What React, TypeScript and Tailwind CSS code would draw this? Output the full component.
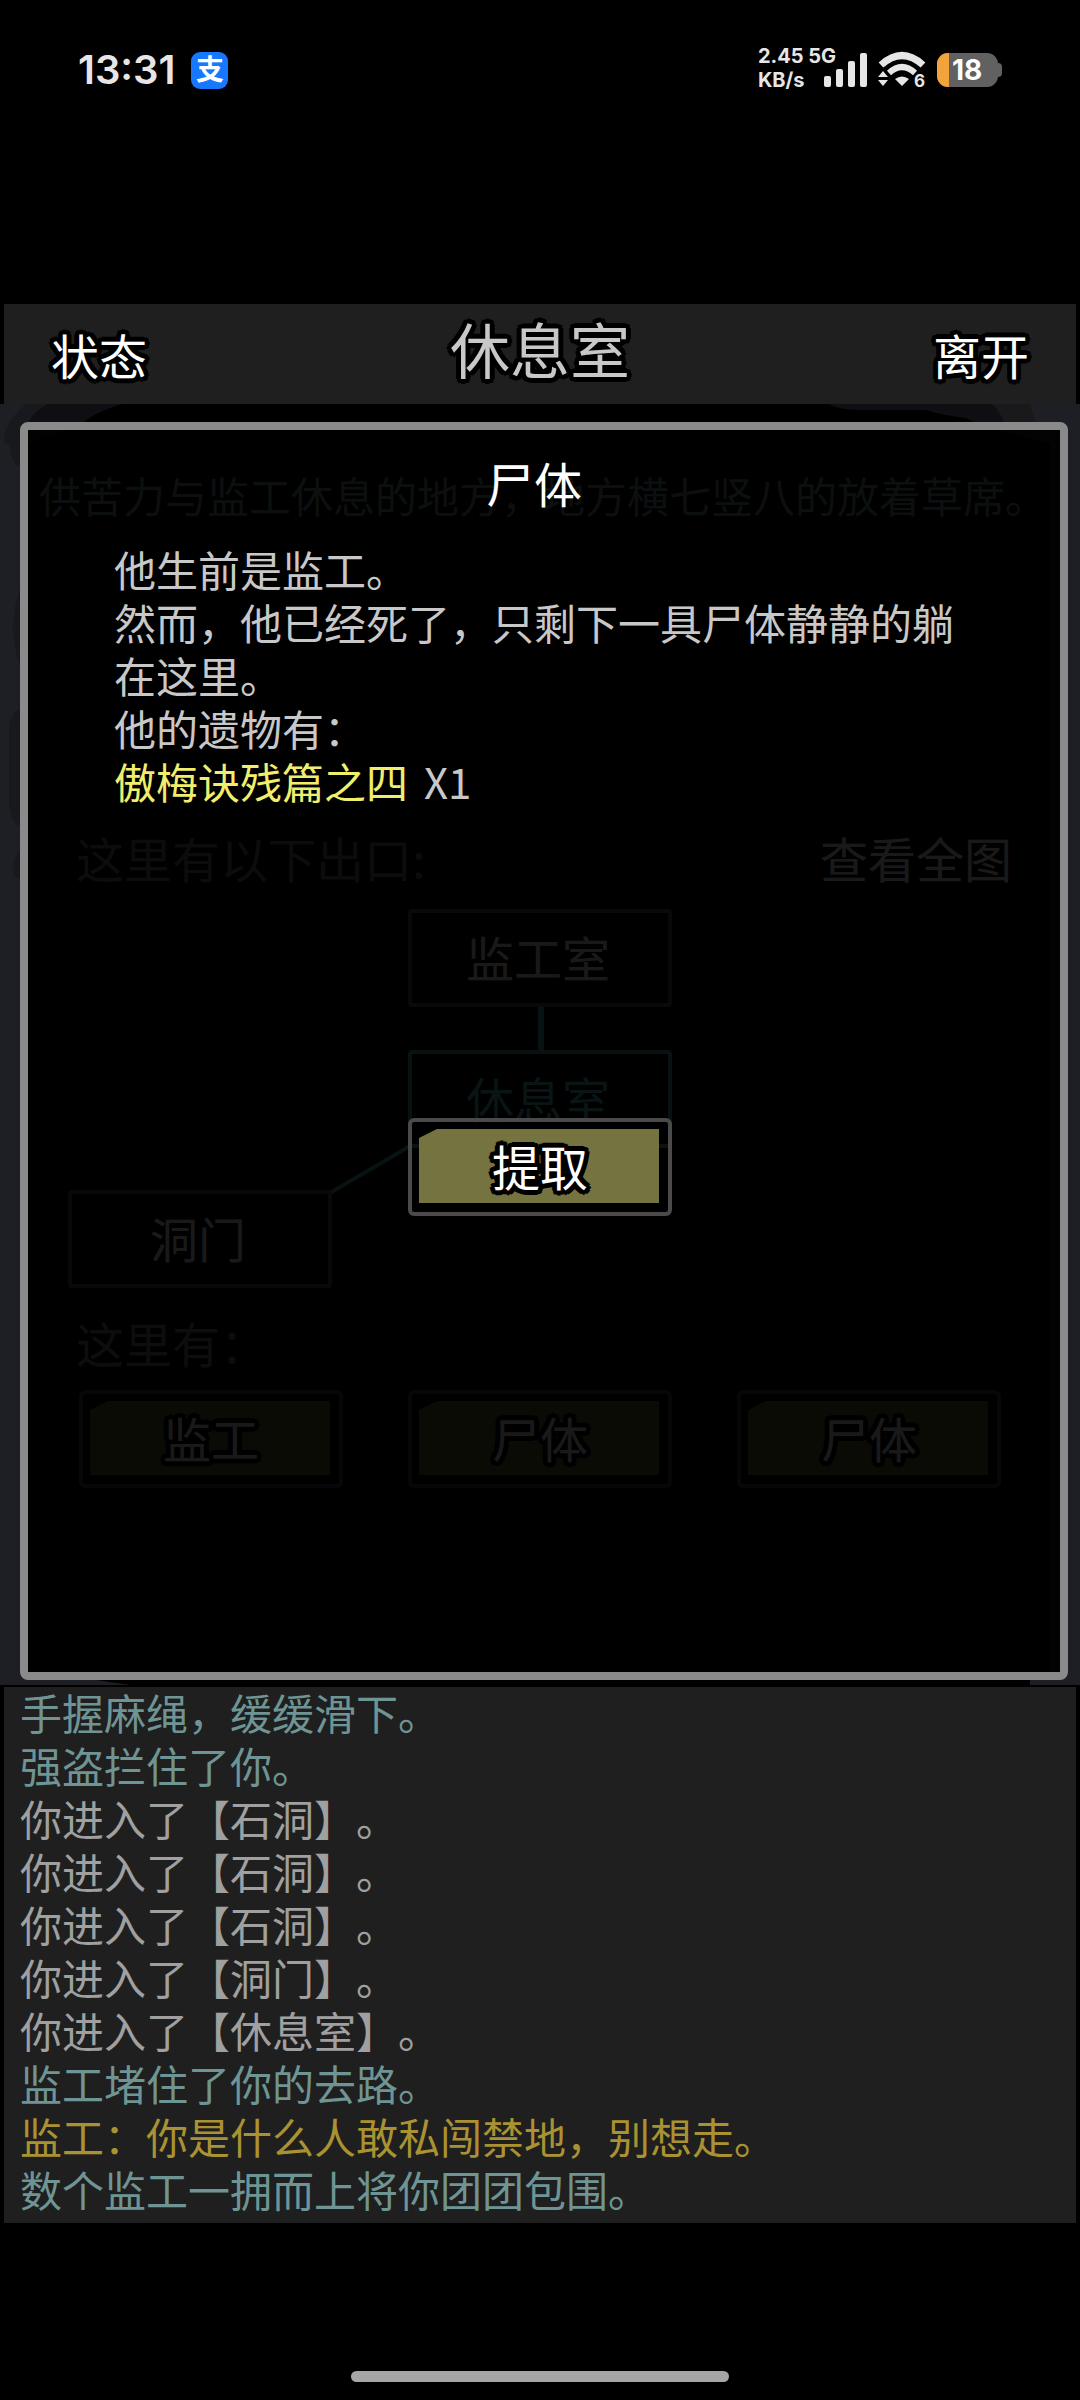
import React from "react";

interface LogEntry {
  text: string;
  tone: string;
}

const TEAL = "text-[#6f9494]";
const GRAY = "text-[#a0a0a0]";
const GOLD = "text-[#aa9232]";

const log: LogEntry[] = [
  { text: "手握麻绳，缓缓滑下。", tone: TEAL },
  { text: "强盗拦住了你。", tone: TEAL },
  { text: "你进入了【石洞】。", tone: GRAY },
  { text: "你进入了【石洞】。", tone: GRAY },
  { text: "你进入了【石洞】。", tone: GRAY },
  { text: "你进入了【洞门】。", tone: GRAY },
  { text: "你进入了【休息室】。", tone: GRAY },
  { text: "监工堵住了你的去路。", tone: TEAL },
  { text: "监工：你是什么人敢私闯禁地，别想走。", tone: GOLD },
  { text: "数个监工一拥而上将你团团包围。", tone: TEAL },
];

const occupants = ["监工", "尸体", "尸体"];

// Thick black edge with rounded joins around light text
const outline =
  "[-webkit-text-stroke:5px_#000] [paint-order:stroke_fill] [text-shadow:5px_0_#000,-5px_0_#000,0_5px_#000,0_-5px_#000,4px_3px_#000,-4px_3px_#000,4px_-3px_#000,-4px_-3px_#000,3px_4px_#000,-3px_4px_#000,3px_-4px_#000,-3px_-4px_#000,2px_2px_#000,-2px_2px_#000,2px_-2px_#000,-2px_-2px_#000]";

const StatusBar: React.FC = () => (
  <div className="flex h-[304px] items-start justify-between px-[78px] pt-[38px] font-['Inter','Noto_Sans_CJK_SC',sans-serif] text-[#e6e6e6]">
    <div className="flex h-[64px] items-center gap-4">
      <span className="text-[40px] leading-none font-semibold">13:31</span>
      <span className="flex h-[37px] w-[37px] items-center justify-center rounded-[9px] bg-[#1677ff] text-[28px] leading-none font-bold text-white">
        支
      </span>
    </div>
    <div className="flex h-[64px] items-center">
      <div className="pb-1 text-[20px] leading-[24px] font-bold">
        <div>2.45 5G</div>
        <div>KB/s</div>
      </div>
      <svg className="-ml-3 h-[36px] w-[44px]" viewBox="0 0 44 36" fill="currentColor">
        <rect x="0" y="24" width="7" height="11" rx="2" />
        <rect x="12" y="17" width="7" height="18" rx="2" />
        <rect x="24" y="9" width="7" height="26" rx="2" />
        <rect x="36" y="1" width="7" height="34" rx="2" />
      </svg>
      <svg className="ml-[10px] h-[38px] w-[48px] overflow-visible" viewBox="0 0 48 38">
        <path d="M3 14 Q24 -5 45 14" fill="none" stroke="currentColor" strokeWidth="7" />
        <path d="M11 22 Q24 10 37 22" fill="none" stroke="currentColor" strokeWidth="6" />
        <path d="M17 28 Q24 23 31 28 L24 35 Z" fill="currentColor" />
        <path d="M5 20 L10 26 H0 Z M0 29 H10 L5 35 Z" fill="currentColor" />
        <text x="36" y="36" fontSize="17" fontWeight="700" fill="currentColor">
          6
        </text>
      </svg>
      <div className="ml-[11px] flex items-center">
        <div className="flex h-[34px] w-[61px] items-center overflow-hidden rounded-[11px] bg-[#616161]">
          <div className="h-full w-[12px] bg-[#f2a33c]" />
          <span className="pl-[3px] text-[28px] leading-none font-bold text-white">18</span>
        </div>
        <div className="h-[14px] w-[4px] rounded-r-full bg-[#616161]" />
      </div>
    </div>
  </div>
);

interface PlateButtonProps {
  label: string;
}

// Framed button with a filled plate whose top left corner is cut
const PlateButton: React.FC<PlateButtonProps> = ({ label }) => (
  <button
    type="button"
    className="h-[98px] w-[264px] rounded-[6px] border-4 border-[#4a4a4a] pt-[7px] pr-[9px] pb-[9px] pl-[7px]"
  >
    <span className="flex h-full items-center justify-center bg-[#777641]/98 pb-[2px] pl-[2px] [clip-path:polygon(18px_0,100%_0,100%_100%,0_100%,0_9px)]">
      <span className={`text-[48px] leading-none text-white ${outline}`}>{label}</span>
    </span>
  </button>
);

// Ink wash behind the scene: black centre, slate margins
const InkBackdrop: React.FC = () => (
  <svg
    className="absolute inset-0 h-full w-full"
    viewBox="0 0 1080 1281"
    preserveAspectRatio="none"
  >
    <rect width="1080" height="1281" fill="#1e1f24" />
    <path d="M26 0Q4 18 4 38L10 42Q12 60 18 62H60L120 0Z" fill="#18191c" />
    <path d="M20 184Q8 222 16 248L22 268H40V184Z" fill="#18191c" />
    <path d="M20 304Q10 310 9 326V400Q10 418 20 422H40V304Z" fill="#18191c" />
    <path d="M20 446Q8 462 16 474H40V446Z" fill="#18191c" />
    <path d="M992 0H1030L1036 20H980Z" fill="#19191b" />
    <path d="M48 0H992Q1001 8 1004 20H28Q32 8 48 0Z" fill="#0e0e13" />
    <path
      d="M122 0H828Q840 6 860 6H926Q946 12 966 14L978 20L1050 40V1270L1030 1276V1281H130L28 1266V40L84 18Q96 8 122 0Z"
      fill="#000"
    />
  </svg>
);

const RoomMap: React.FC = () => (
  <div className="relative mt-[22px] h-[379px] text-[48px]">
    <svg className="absolute inset-0 h-full w-full" fill="none" stroke="#50b4b4">
      <path d="M541 96V141" strokeWidth="6" />
      <path d="M330 284L410 237" strokeWidth="4" />
    </svg>
    <button
      type="button"
      className="absolute top-0 left-[408px] h-[98px] w-[264px] rounded-[4px] border-4 border-[#606060] pr-1 pb-1 text-white"
    >
      监工室
    </button>
    <button
      type="button"
      className="absolute top-[141px] left-[408px] h-[98px] w-[264px] rounded-[4px] border-4 border-[#50b4b4] pr-1 pb-1 text-[#5ac8c8]"
    >
      休息室
    </button>
    <button
      type="button"
      className="absolute top-[281px] left-[68px] h-[98px] w-[264px] rounded-[4px] border-4 border-[#606060] pr-1 pb-1 text-white"
    >
      洞门
    </button>
  </div>
);

const Scene: React.FC = () => (
  <div className="relative pt-[64px] pb-[197px]">
    <p className="pl-[39px] text-[42px] leading-[53px] text-[#7c9494]">
      供苦力与监工休息的地方，地方横七竖八的放着草席。
    </p>
    <div className="mt-[306px] flex items-center justify-between pr-[68px] pl-[76px] text-[48px] leading-[60px]">
      <h2 className="text-[#787878]">这里有以下出口:</h2>
      <button type="button" className="text-white">
        查看全图
      </button>
    </div>
    <RoomMap />
    <h2 className="mt-[24px] pl-[76px] text-[48px] leading-[60px] text-[#808080]">
      这里有：
    </h2>
    <div className="mt-[18px] flex justify-between px-[79px]">
      {occupants.map((name, i) => (
        <PlateButton key={i} label={name} />
      ))}
    </div>
  </div>
);

const CorpseDialog: React.FC = () => (
  <div
    role="dialog"
    aria-labelledby="dialog-title"
    className="absolute top-[18px] right-[12px] bottom-[5px] left-[20px] rounded-[8px] border-8 border-[#8a8a8a] bg-black/90 bg-clip-padding pt-[22px]"
  >
    <div className="pr-[106px] pl-[86px] text-[42px] leading-[53px] text-[#c8c8c8]">
      <h2
        id="dialog-title"
        className="text-center text-[48px] leading-[60px] text-white"
      >
        尸体
      </h2>
      <div className="mt-[30px]">
        <p>他生前是监工。</p>
        <p>然而，他已经死了，只剩下一具尸体静静的躺在这里。</p>
        <p>他的遗物有：</p>
        <p className="flex gap-4">
          <span className="text-[#f0ee6c]">傲梅诀残篇之四</span>
          <span>X1</span>
        </p>
      </div>
    </div>
    <div className="mt-[311px] flex justify-center pr-2">
      <PlateButton label="提取" />
    </div>
  </div>
);

export default function App() {
  return (
    <main className="flex min-h-screen flex-col bg-black font-['Noto_Sans_CJK_SC',sans-serif] [text-spacing-trim:space-all]">
      <StatusBar />

      <header className="mx-1 grid h-[100px] grid-cols-3 items-center bg-[#1f1f1f] px-[47px]">
        <button
          type="button"
          className={`justify-self-start text-[48px] leading-none text-white ${outline}`}
        >
          状态
        </button>
        <h1
          className={`justify-self-center pb-3 font-['KaiTi','AR_PL_UKai_CN','Noto_Sans_CJK_SC',serif] text-[60px] leading-none text-[#c8c8c8] ${outline}`}
        >
          休息室
        </h1>
        <button
          type="button"
          className={`justify-self-end text-[48px] leading-none text-white ${outline}`}
        >
          离开
        </button>
      </header>

      <section className="relative">
        <InkBackdrop />
        <Scene />
        <CorpseDialog />
      </section>

      <section className="mx-1 mt-[2px] flex flex-col bg-[#1f1f1f] px-4 pb-2">
        <div className="-mt-[2px] text-[42px] leading-[53px]">
          {log.map((entry, i) => (
            <p key={i} className={entry.tone}>
              {entry.text}
            </p>
          ))}
        </div>
      </section>

      <div className="mx-auto mt-auto mb-[18px] h-[11px] w-[378px] rounded-full bg-[#a6a6a6]" />
    </main>
  );
}
